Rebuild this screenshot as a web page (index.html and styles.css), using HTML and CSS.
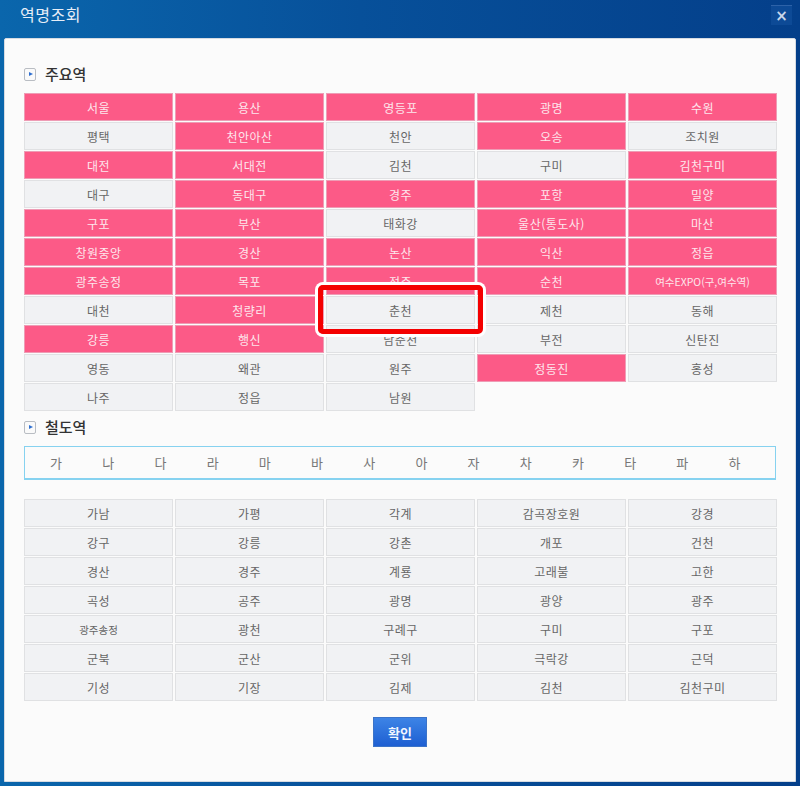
FILE: index.html
```html
<!DOCTYPE html>
<html lang="ko">
<head>
<meta charset="utf-8">
<title>역명조회</title>
<link rel="stylesheet" href="styles.css">
</head>
<body>
<div class="titlebar">
  <h1 class="title">역명조회</h1>
  <button class="close" aria-label="닫기">×</button>
</div>
<div class="panel">
  <h2 class="sec"><span class="sec-ico"></span>주요역</h2>
  <div class="grid">
    <div class="cell on">서울</div><div class="cell on">용산</div><div class="cell on">영등포</div><div class="cell on">광명</div><div class="cell on">수원</div>
    <div class="cell">평택</div><div class="cell on">천안아산</div><div class="cell">천안</div><div class="cell on">오송</div><div class="cell">조치원</div>
    <div class="cell on">대전</div><div class="cell on">서대전</div><div class="cell">김천</div><div class="cell">구미</div><div class="cell on">김천구미</div>
    <div class="cell">대구</div><div class="cell on">동대구</div><div class="cell on">경주</div><div class="cell on">포항</div><div class="cell on">밀양</div>
    <div class="cell on">구포</div><div class="cell on">부산</div><div class="cell">태화강</div><div class="cell on">울산(통도사)</div><div class="cell on">마산</div>
    <div class="cell on">창원중앙</div><div class="cell on">경산</div><div class="cell on">논산</div><div class="cell on">익산</div><div class="cell on">정읍</div>
    <div class="cell on">광주송정</div><div class="cell on">목포</div><div class="cell on">전주</div><div class="cell on">순천</div><div class="cell on small">여수EXPO(구,여수역)</div>
    <div class="cell">대천</div><div class="cell on">청량리</div><div class="cell">춘천</div><div class="cell">제천</div><div class="cell">동해</div>
    <div class="cell on">강릉</div><div class="cell on">행신</div><div class="cell">남춘천</div><div class="cell">부전</div><div class="cell">신탄진</div>
    <div class="cell">영동</div><div class="cell">왜관</div><div class="cell">원주</div><div class="cell on">정동진</div><div class="cell">홍성</div>
    <div class="cell">나주</div><div class="cell">정읍</div><div class="cell">남원</div>
  </div>

  <h2 class="sec sec2"><span class="sec-ico"></span>철도역</h2>
  <div class="initials">
    <span>가</span><span>나</span><span>다</span><span>라</span><span>마</span><span>바</span><span>사</span><span>아</span><span>자</span><span>차</span><span>카</span><span>타</span><span>파</span><span>하</span>
  </div>

  <div class="grid grid2">
    <div class="cell">가남</div><div class="cell">가평</div><div class="cell">각계</div><div class="cell">감곡장호원</div><div class="cell">강경</div>
    <div class="cell">강구</div><div class="cell">강릉</div><div class="cell">강촌</div><div class="cell">개포</div><div class="cell">건천</div>
    <div class="cell">경산</div><div class="cell">경주</div><div class="cell">계룡</div><div class="cell">고래불</div><div class="cell">고한</div>
    <div class="cell">곡성</div><div class="cell">공주</div><div class="cell">광명</div><div class="cell">광양</div><div class="cell">광주</div>
    <div class="cell small">광주송정</div><div class="cell">광천</div><div class="cell">구례구</div><div class="cell">구미</div><div class="cell">구포</div>
    <div class="cell">군북</div><div class="cell">군산</div><div class="cell">군위</div><div class="cell">극락강</div><div class="cell">근덕</div>
    <div class="cell">기성</div><div class="cell">기장</div><div class="cell">김제</div><div class="cell">김천</div><div class="cell">김천구미</div>
  </div>

  <div class="actions"><button class="ok">확인</button></div>
</div>
<div class="highlight"></div>
</body>
</html>
```

FILE: styles.css
```css
html, body {
  margin: 0;
  padding: 0;
}
body {
  width: 800px;
  height: 786px;
  overflow: hidden;
  position: relative;
  background: linear-gradient(to right, #0a66ac 0%, #07509a 45%, #043f8a 100%);
  font-family: "Noto Sans CJK KR", "Noto Sans", sans-serif;
}
.titlebar {
  height: 38px;
  display: flex;
  align-items: flex-start;
  justify-content: space-between;
  padding: 0 8px 0 20px;
  box-sizing: border-box;
}
.title {
  margin: 0;
  padding-top: 3px;
  font-size: 16px;
  font-weight: 400;
  line-height: 22px;
  color: #e6edf7;
  letter-spacing: 0.5px;
}
.close {
  margin-top: 5px;
  width: 21px;
  height: 20px;
  padding: 0;
  border: none;
  border-top: 1px solid #2d62a8;
  background: #0d4a96;
  color: #c9d6ea;
  font-family: "DejaVu Sans", sans-serif;
  font-size: 15px;
  font-weight: 700;
  line-height: 18px;
}
.panel {
  margin: 0 4px;
  height: 744px;
  box-sizing: border-box;
  background: #fbfbfb;
  border: 1px solid #d6dbe2;
  border-radius: 2px 2px 0 0;
  padding: 25px 19px 0 19px;
}
.sec {
  margin: 0 0 9px 0;
  display: flex;
  align-items: center;
  height: 20px;
  font-size: 15px;
  font-weight: 500;
  color: #333;
  line-height: 20px;
}
.sec2 {
  margin-top: 6px;
}
.sec-ico {
  width: 10px;
  height: 11px;
  border: 1px solid #b9bdc3;
  border-radius: 2px;
  background: #fafafa;
  margin-right: 9px;
  position: relative;
  box-sizing: content-box;
}
.sec-ico::after {
  content: "";
  position: absolute;
  left: 4px;
  top: 3px;
  border-left: 4px solid #2f6fd0;
  border-top: 2.5px solid transparent;
  border-bottom: 2.5px solid transparent;
}
.grid {
  display: grid;
  grid-template-columns: repeat(5, 149px);
  column-gap: 2px;
  row-gap: 1px;
}
.cell {
  height: 28px;
  box-sizing: border-box;
  border: 1px solid #e0e1e3;
  background: #f1f2f4;
  color: #666;
  font-size: 12px;
  display: flex;
  align-items: center;
  justify-content: center;
  letter-spacing: 0.5px;
}
.cell.on {
  background: #fc5a87;
  border-color: #ee9cb5;
  color: #fde6ec;
}
.cell.small {
  font-size: 10.5px;
  letter-spacing: 0;
}
.initials {
  margin-top: 9px;
  height: 34px;
  box-sizing: border-box;
  border: 1px solid #86d2f0;
  border-bottom-width: 2px;
  display: flex;
  align-items: center;
  padding-left: 5px;
}
.initials span {
  width: 52.2px;
  text-align: center;
  font-size: 13px;
  color: #777;
}
.grid2 {
  margin-top: 19px;
}
.actions {
  display: flex;
  justify-content: center;
  margin-top: 16px;
}
.ok {
  width: 54px;
  height: 30px;
  padding: 0;
  border: 1px solid #3b73c8;
  background: linear-gradient(#3d84e6, #1e5fd2);
  color: #f2f6ff;
  font-family: "Noto Sans CJK KR", sans-serif;
  font-size: 13px;
  font-weight: 700;
}
.highlight {
  position: absolute;
  left: 318px;
  top: 285px;
  width: 165px;
  height: 49px;
  box-sizing: border-box;
  border: 5px solid #f40000;
  border-radius: 5px;
  box-shadow: 0 0 0 3px #fff;
}
```
